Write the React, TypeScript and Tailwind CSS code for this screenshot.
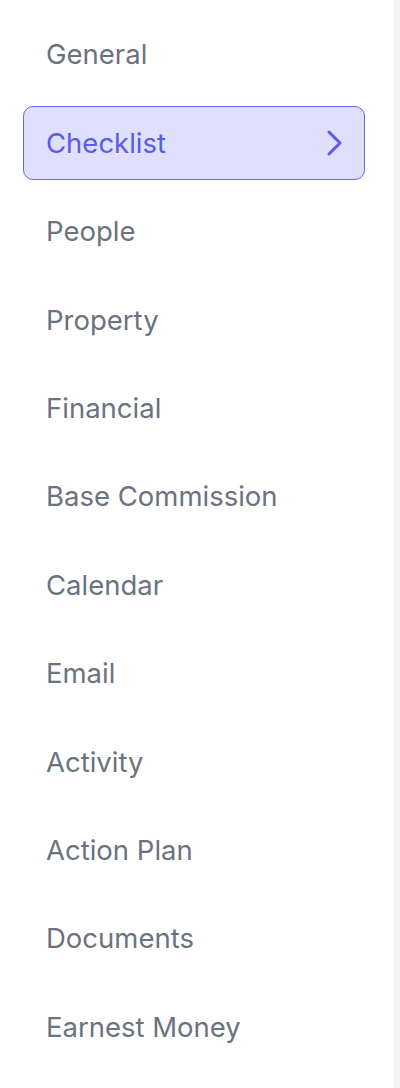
const SECTIONS = [
  "General",
  "Checklist",
  "People",
  "Property",
  "Financial",
  "Base Commission",
  "Calendar",
  "Email",
  "Activity",
  "Action Plan",
  "Documents",
  "Earnest Money",
];

export default function App() {
  const active = "Checklist";

  return (
    <div
      className="flex min-h-[1088px] w-[400px] bg-[#f3f4f6]"
      style={{ fontFamily: "Inter, 'Noto Sans', sans-serif" }}
    >
      <nav className="flex w-[394px] flex-col gap-[14.4px] bg-white pl-[23px] pr-[29px] pt-[18px]">
        {SECTIONS.map((name) => {
          const isActive = name === active;
          return (
            <button
              key={name}
              type="button"
              className={
                isActive
                  ? "flex h-[74px] items-center justify-between rounded-[10px] border border-[#6366f1] bg-[#e0e0fc] pl-[22px] pr-[20px] text-left text-[27.5px] text-[#5b5be6]"
                  : "flex h-[74px] items-center justify-between rounded-[10px] border border-transparent pl-[22px] pr-[20px] text-left text-[27.5px] text-[#6b7280]"
              }
            >
              <span>{name}</span>
              {isActive && (
                <svg
                  width="18"
                  height="28"
                  viewBox="0 0 18 28"
                  fill="none"
                  stroke="currentColor"
                  strokeWidth={3}
                  strokeLinecap="round"
                  strokeLinejoin="round"
                >
                  <polyline points="3,3 14,14 3,25" />
                </svg>
              )}
            </button>
          );
        })}
      </nav>
    </div>
  );
}
